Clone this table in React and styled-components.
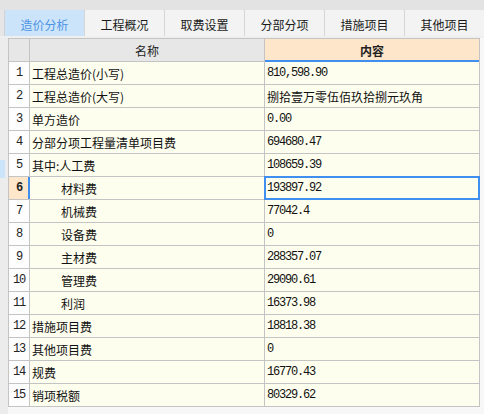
import React from 'react';
import styled, { createGlobalStyle, css } from 'styled-components';

const GlobalStyle = createGlobalStyle`
  html, body { margin: 0; padding: 0; background: #f7f7f7; }
  body { font-family: "Noto Sans CJK SC", sans-serif; color: #111; }
  * { box-sizing: border-box; }
`;

const BLUE = '#3f8ef0';
const PEACH = '#fde6c9';
const LINE = '#c4c4c4';

const Page = styled.div`
  width: 484px;
  height: 414px;
  overflow: hidden;
  display: flex;
  flex-direction: column;
  background: #f7f7f7;
`;

const TopStrip = styled.div`
  flex: none;
  height: 10px;
  background: #e3e3e3;
`;

const TabBar = styled.div`
  flex: none;
  display: flex;
  height: 26px;
  background: #e3e3e3;
  overflow: hidden;
`;

const TabStub = styled.div`
  flex: none;
  width: 5px;
  background: #e6e6e6;
  border-right: 1px solid #d2d2d2;
`;

const Tab = styled.div`
  flex: none;
  width: 80px;
  height: 26px;
  display: flex;
  align-items: center;
  justify-content: center;
  padding-top: 2px;
  font-size: 12px;
  border-right: 1px solid #d6d6d6;
  background: ${p => (p.$active ? '#cce4f9' : '#f3f3f3')};
  color: ${p => (p.$active ? '#4d94e6' : '#1a1a1a')};
`;

const Gap = styled.div`
  flex: none;
  height: 2px;
  background: #efefef;
`;

const Body = styled.div`
  flex: 1;
  display: flex;
  align-items: flex-start;
`;

const SidePane = styled.div`
  flex: none;
  width: 8px;
  align-self: stretch;
  background: #ececec;
  display: flex;
  flex-direction: column;
  padding-top: 122px;
`;

const SideMarker = styled.div`
  width: 5px;
  height: 18px;
  background: #cce4f9;
`;

const Grid = styled.div`
  display: grid;
  grid-template-columns: 20px 234px 214px;
  grid-auto-rows: 22px;
  gap: 1px;
  background: ${LINE};
  border: 1px solid ${LINE};
`;

const mono = css`
  font-family: "Liberation Mono", "Noto Sans CJK SC", monospace;
  letter-spacing: -1.2px;
`;

const HeadCell = styled.div`
  display: flex;
  align-items: center;
  justify-content: center;
  font-size: 12px;
  background: ${p => (p.$accent ? PEACH : '#e7e7e7')};
  font-weight: ${p => (p.$accent ? 700 : 400)};
  color: #222;
  ${p => p.$accent && css`box-shadow: inset 0 -1px 0 ${BLUE}, 0 1px 0 ${BLUE};`}
  position: relative;
  z-index: ${p => (p.$accent ? 1 : 0)};
`;

const NumCell = styled.div`
  display: flex;
  align-items: center;
  justify-content: center;
  font-size: 12px;
  ${mono}
  background: ${p => (p.$active ? PEACH : '#fdfdfd')};
  font-weight: ${p => (p.$active ? 700 : 400)};
  color: #222;
  ${p => p.$active && css`box-shadow: inset -1px 0 0 ${BLUE}, 1px 0 0 ${BLUE};`}
  position: relative;
  z-index: ${p => (p.$active ? 1 : 0)};
`;

const NameCell = styled.div`
  display: flex;
  align-items: center;
  font-size: 12px;
  padding-left: ${p => (p.$indent ? 31 : 2)}px;
  background: #fefeee;
  color: #111;
  white-space: nowrap;
`;

const ValueCell = styled.div`
  display: flex;
  align-items: center;
  font-size: 12px;
  padding-left: 2px;
  background: #fefeee;
  color: #111;
  white-space: nowrap;
  ${p => p.$mono && mono}
  ${p => p.$selected && css`
    box-shadow: 0 0 0 1px ${BLUE}, inset 0 0 0 1px ${BLUE};
    position: relative;
    z-index: 2;
  `}
`;

const tabs = ['造价分析', '工程概况', '取费设置', '分部分项', '措施项目', '其他项目'];

const rows = [
  { name: '工程总造价(小写)', value: '810,598.90' },
  { name: '工程总造价(大写)', value: '捌拾壹万零伍佰玖拾捌元玖角' },
  { name: '单方造价', value: '0.00' },
  { name: '分部分项工程量清单项目费', value: '694680.47' },
  { name: '其中:人工费', value: '108659.39' },
  { name: '材料费', value: '193897.92', indent: true },
  { name: '机械费', value: '77042.4', indent: true },
  { name: '设备费', value: '0', indent: true },
  { name: '主材费', value: '288357.07', indent: true },
  { name: '管理费', value: '29090.61', indent: true },
  { name: '利润', value: '16373.98', indent: true },
  { name: '措施项目费', value: '18818.38' },
  { name: '其他项目费', value: '0' },
  { name: '规费', value: '16770.43' },
  { name: '销项税额', value: '80329.62' },
];

const SELECTED = 6;

export default function App() {
  return (
    <>
      <GlobalStyle />
      <Page>
        <TopStrip />
        <TabBar>
          <TabStub />
          {tabs.map((t, i) => (
            <Tab key={t} $active={i === 0}>{t}</Tab>
          ))}
        </TabBar>
        <Gap />
        <Body>
          <SidePane>
            <SideMarker />
          </SidePane>
          <Grid>
            <HeadCell />
            <HeadCell>名称</HeadCell>
            <HeadCell $accent>内容</HeadCell>
            {rows.map((r, i) => {
              const n = i + 1;
              const isMono = /^[0-9.,]+$/.test(r.value);
              return (
                <React.Fragment key={n}>
                  <NumCell $active={n === SELECTED}>{n}</NumCell>
                  <NameCell $indent={r.indent}>{r.name}</NameCell>
                  <ValueCell $mono={isMono} $selected={n === SELECTED}>{r.value}</ValueCell>
                </React.Fragment>
              );
            })}
          </Grid>
        </Body>
      </Page>
    </>
  );
}
